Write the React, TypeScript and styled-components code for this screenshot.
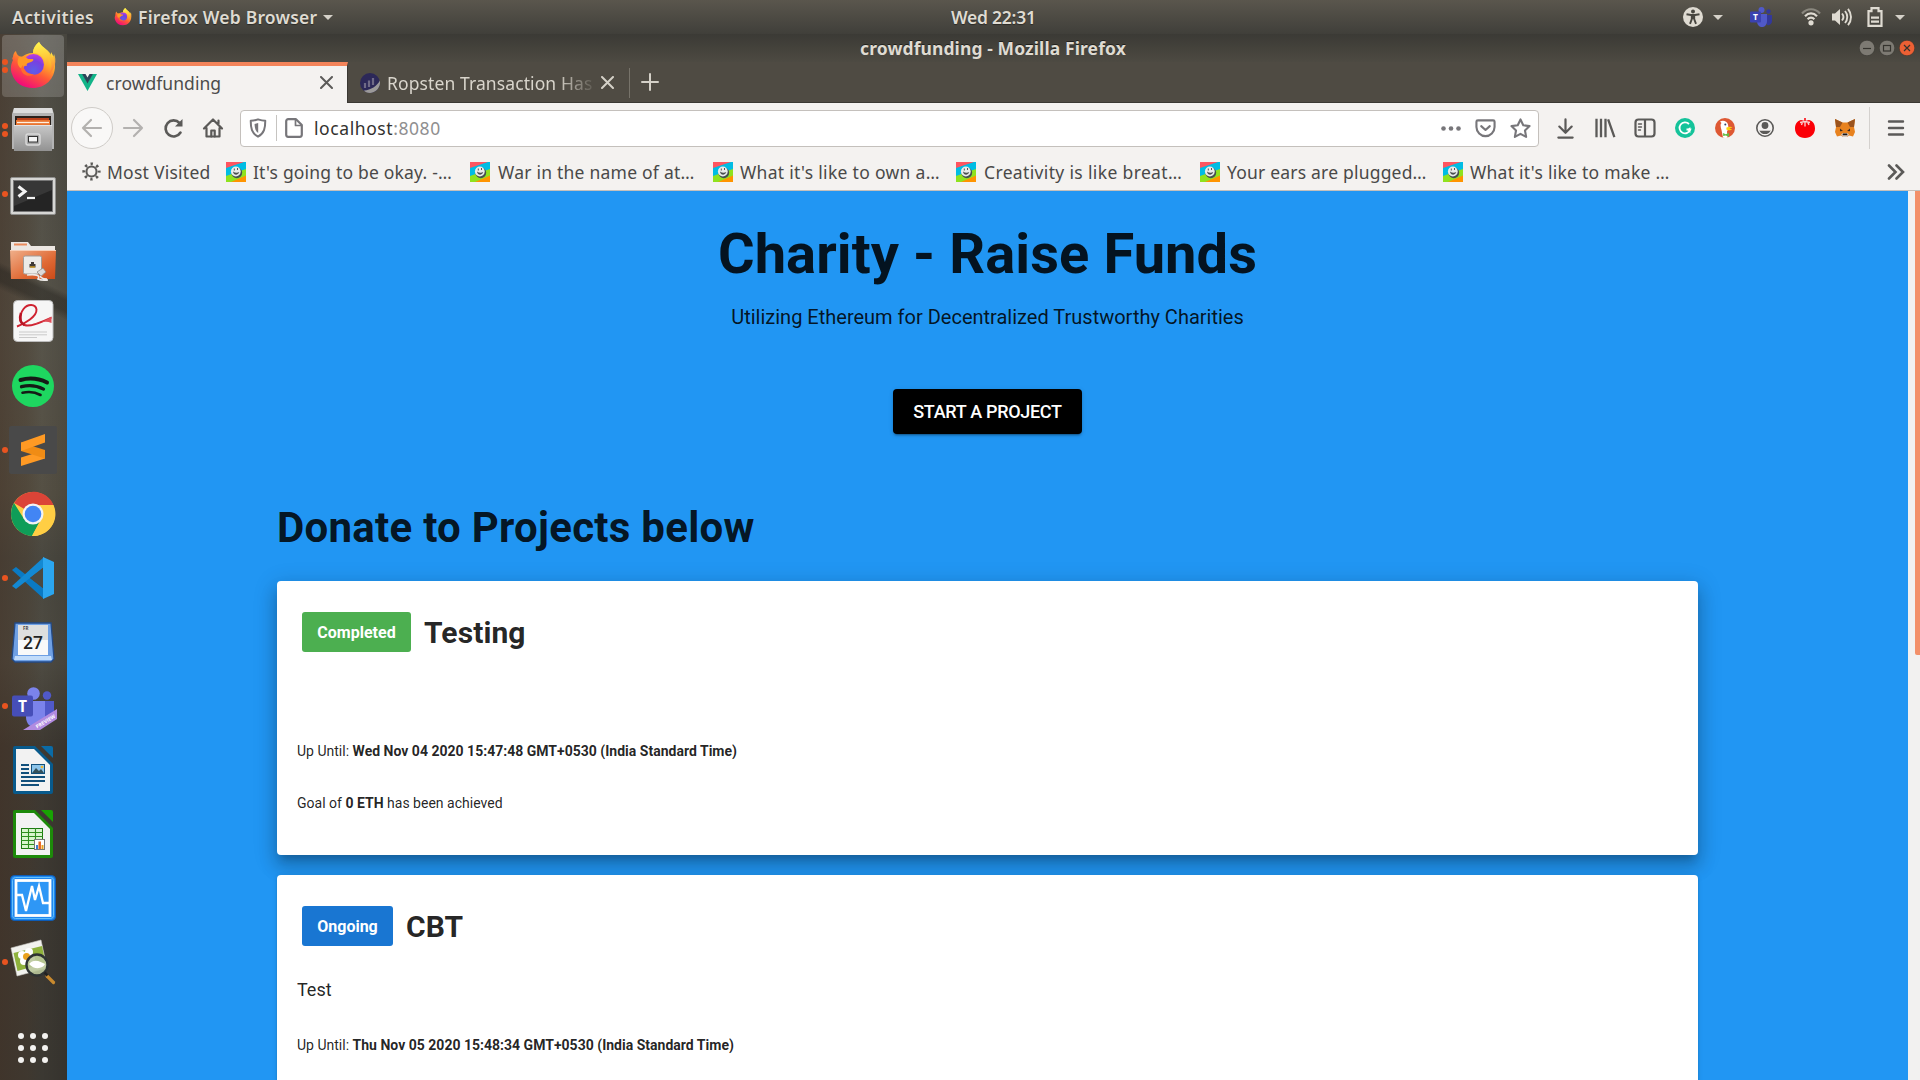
import React from "react";
import styled, { createGlobalStyle } from "styled-components";

const ui = `"Noto Sans", "Open Sans", sans-serif`;

const Global = createGlobalStyle`
  * { box-sizing: border-box; }
  html, body { margin: 0; padding: 0; }
  body { width: 1920px; height: 1080px; overflow: hidden; background: #3c3b37; }
  svg { display: block; flex: none; }
`;

const Desktop = styled.div`
  width: 1920px;
  height: 1080px;
  display: flex;
  flex-direction: column;
  overflow: hidden;
  font-family: ${ui};
`;

/* ---------- top panel ---------- */
const Panel = styled.header`
  height: 34px;
  flex: none;
  display: grid;
  grid-template-columns: 1fr 90px 1fr;
  align-items: center;
  padding: 0 12px 0 12px;
  background: linear-gradient(#5a564d, #403f3a);
  color: #dfdbd2;
`;
const PanelGroup = styled.div<{ $end?: boolean }>`
  display: flex;
  align-items: center;
  height: 34px;
  justify-content: ${(p) => (p.$end ? "flex-end" : "flex-start")};
`;
const PanelText = styled.span<{ $track?: number; $gap?: number }>`
  font-size: 17.5px;
  line-height: 34px;
  font-weight: 600;
  white-space: nowrap;
  text-shadow: 0 1px 1px rgba(0, 0, 0, 0.4);
  letter-spacing: ${(p) => p.$track ?? 0}px;
  margin-right: ${(p) => p.$gap ?? 0}px;
`;
const Clock = styled.span`
  display: block;
  width: 90px;
  margin-left: 36px;
`;
const Caret = styled.i<{ $left: number; $right?: number }>`
  border: 5px solid transparent;
  border-top-color: #d5d1c9;
  border-bottom: 0;
  margin: 1px ${(p) => p.$right ?? 0}px 0 ${(p) => p.$left}px;
`;
const Spaced = styled.span<{ $left?: number }>`
  display: flex;
  margin-left: ${(p) => p.$left ?? 0}px;
`;

/* ---------- dock ---------- */
const Workspace = styled.div`
  flex: 1;
  min-height: 0;
  display: flex;
`;
const Dock = styled.nav`
  width: 67px;
  flex: none;
  display: flex;
  flex-direction: column;
  background:
    linear-gradient(205deg, transparent 0 235px, rgba(35, 33, 29, 0.45) 242px 252px, transparent 260px),
    linear-gradient(90deg, rgba(68, 49, 36, 0.5) 0, rgba(72, 55, 40, 0.3) 40%, transparent 62%, rgba(0, 0, 0, 0.1) 100%),
    linear-gradient(#4f4d45 0, #57544a 28%, #555044 44%, #4a4840 50%, #4e4b42 60%, #3e3932 68%, #3b3832 100%);
`;
const DockItem = styled.div<{ $active?: boolean }>`
  height: 64px;
  flex: none;
  display: flex;
  align-items: center;
  background: ${(p) =>
    p.$active ? "linear-gradient(rgba(255,255,255,.2), rgba(255,255,255,.17))" : "none"};
  background-clip: padding-box;
  border: 1px solid transparent;
  border-radius: 5px;
  margin: 0 2px 0 1px;
`;
const Dots = styled.div`
  width: 7px;
  flex: none;
  display: flex;
  flex-direction: column;
  gap: 2.5px;
`;
const Dot = styled.i`
  width: 6px;
  height: 6px;
  border-radius: 3px;
  background: #e95420;
`;
const AppsGrid = styled.div`
  display: grid;
  grid-template-columns: repeat(3, 6px);
  gap: 6px;
  margin: 39px 0 0 18px;
`;
const AppsDot = styled.i`
  width: 6px;
  height: 6px;
  border-radius: 3px;
  background: #f3f2f0;
`;

/* ---------- browser window ---------- */
const Window = styled.section`
  flex: 1;
  min-width: 0;
  display: flex;
  flex-direction: column;
`;
const TitleBar = styled.div`
  height: 28px;
  flex: none;
  display: flex;
  align-items: center;
  padding: 0 5px 0 793px;
  background: linear-gradient(#3b3a35, #4d4a42);
  color: #dfdbd2;
`;
const WindowTitle = styled.span`
  font-size: 17.5px;
  font-weight: 700;
  line-height: 28px;
  letter-spacing: 0.1px;
  white-space: nowrap;
  text-shadow: 0 -1px 0 rgba(0, 0, 0, 0.5);
`;
const WindowButtons = styled.div`
  display: flex;
  margin-left: auto;
  gap: 4px;
`;
const TabStrip = styled.div`
  height: 41px;
  flex: none;
  display: flex;
  background: #4f4b43;
  border-bottom: 1px solid #3a3833;
`;
const Tab = styled.div<{ $selected?: boolean }>`
  width: ${(p) => (p.$selected ? 281 : 282)}px;
  height: ${(p) => (p.$selected ? 41 : 40)}px;
  display: flex;
  align-items: center;
  padding: ${(p) => (p.$selected ? "0 14px 4px 11px" : "1px 16px 0 12px")};
  color: ${(p) => (p.$selected ? "#4c4c4c" : "#d9d5cc")};
  background: ${(p) => (p.$selected ? "#f4f2f0" : "transparent")};
  border-top: ${(p) => (p.$selected ? "4px solid #f4845a" : "0")};
  border-right: ${(p) => (p.$selected ? "1px solid #3a3833" : "0")};
`;
const TabLabel = styled.span<{ $fade?: boolean }>`
  flex: 1;
  min-width: 0;
  white-space: nowrap;
  font-size: 17.5px;
  line-height: 28px;
  letter-spacing: ${(p) => (p.$fade ? 0.1 : 0.05)}px;
  margin: 0 ${(p) => (p.$fade ? 8 : 10)}px 0 ${(p) => (p.$fade ? 7 : 9)}px;
  mask-image: ${(p) =>
    p.$fade ? "linear-gradient(90deg, #000 82%, rgba(0,0,0,.12) 100%)" : "none"};
`;
const TabDivider = styled.i`
  width: 1px;
  height: 30px;
  margin: 6px 11px 0 -1px;
  background: #77736a;
`;
const NewTab = styled.div`
  display: flex;
  align-items: center;
`;

const NavBar = styled.div`
  height: 54px;
  flex: none;
  display: flex;
  align-items: center;
  padding-bottom: 4px;
  background: #f4f2f0;
  color: #5b5a58;
`;
const BackButton = styled.div`
  width: 42px;
  height: 42px;
  margin-left: 4px;
  display: grid;
  place-items: center;
  border-radius: 50%;
  border: 1px solid #cfccc8;
  background: #f9f8f7;
`;
const NavButton = styled.div<{ $w?: number }>`
  width: ${(p) => p.$w ?? 40}px;
  display: grid;
  place-items: center;
`;
const UrlBar = styled.div`
  width: 1299px;
  height: 37px;
  margin-left: 7px;
  display: flex;
  align-items: center;
  background: #fff;
  border: 1px solid #c4c0bc;
  border-radius: 4px;
  color: #77767a;
`;
const UrlDivider = styled.i`
  width: 1px;
  height: 26px;
  background: #c6c4c1;
  margin: 0 8px 0 1px;
`;
const UrlText = styled.span`
  flex: 1;
  font-size: 17.5px;
  line-height: 34px;
  letter-spacing: 0.58px;
  margin-left: 11px;
  color: #8f8f90;
  b { font-weight: 400; color: #33322f; }
`;
const Extensions = styled.div`
  display: flex;
  align-items: center;
  margin-left: 6px;
`;
const BarDivider = styled.i`
  width: 1px;
  height: 42px;
  margin: 0 6px 0 4px;
  background: #d4d1ce;
`;

const Bookmarks = styled.div`
  height: 34px;
  flex: none;
  display: flex;
  align-items: center;
  padding: 0 15px 4px 15px;
  background: #f4f2f0;
  border-bottom: 1px solid #c4c0bc;
  color: #4a4948;
`;
const Bookmark = styled.div<{ $w: number; $track: number; $gap?: number }>`
  width: ${(p) => p.$w}px;
  flex: none;
  display: flex;
  align-items: center;
  gap: ${(p) => p.$gap ?? 7}px;
  white-space: nowrap;
  font-size: 17.5px;
  line-height: 28px;
  letter-spacing: ${(p) => p.$track}px;
`;
const Overflow = styled.div`
  margin-left: auto;
`;

/* ---------- page ---------- */
const Viewport = styled.div`
  flex: 1;
  min-height: 0;
  display: flex;
  background: #f2f1f0;
`;
const Page = styled.main`
  width: 1841px;
  overflow: hidden;
  padding-top: 31px;
  display: flex;
  flex-direction: column;
  align-items: center;
  background: #2196f3;
  font-family: Roboto, sans-serif;
  color: rgba(0, 0, 0, 0.87);
`;
const ScrollTrack = styled.div`
  width: 12px;
  display: flex;
  justify-content: flex-end;
`;
const ScrollThumb = styled.div`
  width: 5px;
  height: 464px;
  background: #f39069;
  border-radius: 0 0 0 2px;
`;
const Headline = styled.h1`
  flex: none;
  margin: 0;
  font-size: 56px;
  line-height: 64px;
  font-weight: 700;
  letter-spacing: 0.1px;
`;
const Tagline = styled.p`
  flex: none;
  margin: 15px 0 0;
  font-size: 20px;
  line-height: 32px;
`;
const StartButton = styled.button`
  flex: none;
  width: 189px;
  height: 45px;
  margin: 56px 0 69px;
  padding: 0;
  border: 0;
  border-radius: 4px;
  background: #000;
  color: #fff;
  font: 500 18px Roboto, sans-serif;
  letter-spacing: -0.3px;
  box-shadow: 0 3px 1px -2px rgba(0, 0, 0, 0.2), 0 2px 2px rgba(0, 0, 0, 0.14), 0 1px 5px rgba(0, 0, 0, 0.12);
`;
const Projects = styled.section`
  flex: none;
  width: 1421px;
  display: flex;
  flex-direction: column;
`;
const SectionTitle = styled.h2`
  margin: 0 0 28px;
  font-size: 42px;
  line-height: 50px;
  font-weight: 700;
  letter-spacing: 0.0062em;
`;
const Card = styled.article<{ $raised?: boolean }>`
  flex: none;
  height: 274px;
  margin-bottom: 20px;
  padding: 31px 20px 0;
  background: #fff;
  border-radius: 4px;
  box-shadow: ${(p) =>
    p.$raised
      ? "0 7px 8px -4px rgba(0,0,0,.2), 0 12px 17px 2px rgba(0,0,0,.14), 0 5px 22px 4px rgba(0,0,0,.12)"
      : "0 3px 1px -2px rgba(0,0,0,.2), 0 2px 2px rgba(0,0,0,.14), 0 1px 5px rgba(0,0,0,.12)"};
`;
const CardHead = styled.div`
  height: 40px;
  display: flex;
  align-items: center;
  gap: 13px;
  padding-left: 5px;
`;
const Chip = styled.span<{ $tone: string; $w: number }>`
  width: ${(p) => p.$w}px;
  height: 40px;
  border-radius: 3px;
  background: ${(p) => p.$tone};
  color: #fff;
  font-size: 16px;
  font-weight: 700;
  line-height: 42px;
  text-align: center;
`;
const CardTitle = styled.h3`
  margin: 2px 0 0;
  font-size: 30px;
  line-height: 40px;
  font-weight: 700;
  letter-spacing: 0.1px;
`;
const Description = styled.p`
  height: 28px;
  margin: 30px 0;
  font-size: 18px;
  line-height: 28px;
`;
const Meta = styled.p`
  margin: 0 0 30px;
  font-size: 14px;
  line-height: 22px;
  letter-spacing: 0.01px;
`;

/* ---------- panel and toolbar drawings ---------- */
const FirefoxLogo = ({ size, id }: { size: number; id: string }) => (
  <svg width={size} height={size} viewBox="0 0 48 48">
    <defs>
      <linearGradient id={`${id}a`} x1=".8" y1=".05" x2=".3" y2="1">
        <stop offset="0" stopColor="#fff44f" />
        <stop offset=".35" stopColor="#ffae2a" />
        <stop offset=".62" stopColor="#ff5a36" />
        <stop offset="1" stopColor="#f0047f" />
      </linearGradient>
      <radialGradient id={`${id}b`} cx=".5" cy=".8" r=".8">
        <stop offset="0" stopColor="#5b5fe8" />
        <stop offset=".6" stopColor="#7a3fe0" />
        <stop offset="1" stopColor="#c03ce0" />
      </radialGradient>
      <linearGradient id={`${id}c`} x1=".4" y1="0" x2=".6" y2="1">
        <stop offset="0" stopColor="#fff44f" />
        <stop offset=".5" stopColor="#ffc83a" />
        <stop offset="1" stopColor="#ff7a36" />
      </linearGradient>
    </defs>
    <path d="M30 0c-4 3-6 7-6 11-5 0-9 2-11 4l-3-1c-2-1-3-4-3-5-2 1-3 4-3 6-1 1-1 2 0 3-2 4-3 9-1 14 3 9 11 14 21 14 12 0 22-9 22-22 0-6-2-11-4-14 0 2 0 3-1 4C41 8 33 6 30 0z" fill={`url(#${id}a)`} />
    <circle cx="24.500" cy="22.500" r="10.500" fill={`url(#${id}b)`} />
    <path d="M30 0c-5 4-6 8-6 11 9 0 13 7 12 13 4-3 3-8 2-10 5 4 6 12 2 18 6-4 8-14 5-20 0 1-1 3-2 3C41 8 33 6 30 0z" fill={`url(#${id}c)`} opacity=".9" />
    <path d="M10 15c3-1 7-1 9 2h5c1 1 0 3-5 4-1 1-2 1-1 3-3-1-3 1-4 3-5-1-7-7-4-12z" fill="#ff9a26" />
    <path d="M14 23c1 7 7 10 12 9-6 4-14 1-14-6z" fill="#ff6a2e" />
  </svg>
);

const Accessibility = () => (
  <svg width="20" height="20" viewBox="0 0 20 20">
    <circle cx="10" cy="10" r="10" fill="#dfdbd2" />
    <circle cx="10" cy="4.600" r="2" fill="#484640" />
    <path d="M3.500 7.200l4.500.8h4l4.500-.8M8.800 8v4L7 16.800M11.200 8v4l1.800 4.800M10 8v4" fill="none" stroke="#484640" strokeWidth="1.900" />
  </svg>
);
const TeamsTray = () => (
  <svg width="22" height="20" viewBox="0 0 22 20">
    <circle cx="11.500" cy="3" r="3" fill="#5059c9" />
    <circle cx="18.500" cy="4.500" r="2.200" fill="#33389a" />
    <path d="M15 8h7v6a4 4 0 0 1-5 4z" fill="#33389a" />
    <path d="M7 7h10v7c0 8-10 8-10 0z" fill="#5059c9" />
    <rect y="4.500" width="11" height="11" rx="1" fill="#3b42b0" />
    <text x="5.500" y="13" fontSize="8.500" fontWeight="700" fill="#fff" textAnchor="middle" fontFamily="Open Sans, sans-serif">T</text>
  </svg>
);
const Wifi = () => (
  <svg width="20" height="18" viewBox="0 0 20 18" fill="none" stroke="#dfdbd2" strokeWidth="2.200">
    <path d="M1 5.500C6-.2 14-.2 19 5.500" opacity=".4" />
    <path d="M4 8.200c3.500-3.700 8.500-3.700 12 0M6.600 11.200c2-2 4.800-2 6.800 0" />
    <circle cx="10" cy="14.800" r="2.600" fill="#dfdbd2" stroke="none" />
  </svg>
);
const Volume = () => (
  <svg width="20" height="18" viewBox="0 0 20 18" fill="none" stroke="#dfdbd2" strokeWidth="1.900">
    <path d="M0 5.500h3L8 1v16l-5-4.500H0z" fill="#dfdbd2" stroke="none" />
    <path d="M10 5.500c1.700 2 1.700 5 0 7M13 3c3 3.500 3 8.500 0 12M16 .8c4 5 4 11.400 0 16.400" />
  </svg>
);
const Battery = () => (
  <svg width="16" height="20" viewBox="0 0 16 20">
    <path d="M4.500 1.200h7v3h3v14.600h-13V4.200h3z" fill="none" stroke="#dfdbd2" strokeWidth="2.200" />
    <path d="M4 10.700h8M4 14.700h8" stroke="#dfdbd2" strokeWidth="2.300" />
  </svg>
);

type Kind = "min" | "max" | "close";
const WindowButton = ({ kind }: { kind: Kind }) => (
  <svg width="16" height="16" viewBox="0 0 16 16">
    <circle cx="8" cy="8" r="7.800" fill={kind === "close" ? "#ed6034" : "#7d7a73"} stroke="#34322e" strokeWidth=".6" />
    <g stroke="#35332e" strokeWidth="1.200" fill="none">
      {kind === "min" && <path d="M4 8.500h8" />}
      {kind === "max" && <rect x="4.500" y="5.500" width="7" height="5.500" />}
      {kind === "close" && <path d="M5 5l6 6M11 5l-6 6" />}
    </g>
  </svg>
);

const VueLogo = () => (
  <svg width="19" height="17" viewBox="0 0 19 17">
    <path d="M0 0h4.500l5 8.500 5-8.500H19L9.500 17z" fill="#12b488" />
    <path d="M4 0h3.500l2 3.500 2-3.500H15L9.500 9.500z" fill="#2c4558" />
  </svg>
);
const Etherscan = () => (
  <svg width="20" height="20" viewBox="0 0 20 20">
    <circle cx="10" cy="10" r="10" fill="#2c2858" />
    <path d="M4 17.500C11 17 17 13 20 7.500 21 15 15 20 10 20c-3 0-5-1-6-2.500z" fill="#9c9a9a" />
    <path d="M5 10v5M9 7.500v6.500M13 5v7" stroke="#6f6a86" strokeWidth="2.200" />
  </svg>
);
const Cross = ({ color }: { color: string }) => (
  <svg width="13" height="13" viewBox="0 0 13 13">
    <path d="M1 1l11 11M12 1L1 12" stroke={color} strokeWidth="2" strokeLinecap="round" />
  </svg>
);
const Plus = () => (
  <svg width="18" height="18" viewBox="0 0 18 18">
    <path d="M9 1v16M1 9h16" stroke="#d5d1c8" strokeWidth="2" strokeLinecap="round" />
  </svg>
);

const Glyph = ({ children, size = 22, color = "currentColor", w = 2.2 }: { children: React.ReactNode; size?: number; color?: string; w?: number }) => (
  <svg width={size} height={size} viewBox="0 0 22 22" fill="none" stroke={color} strokeWidth={w} strokeLinecap="round" strokeLinejoin="round">
    {children}
  </svg>
);
const Back = () => <Glyph color="#b3b1af"><path d="M20 11H2M10 3l-8 8 8 8" /></Glyph>;
const Forward = () => <Glyph color="#b3b1af"><path d="M2 11h18M12 3l8 8-8 8" /></Glyph>;
const Reload = () => (
  <Glyph w={2.600}>
    <path d="M18.500 15.500A8 8 0 1 1 17.500 6" />
    <path d="M20.500 2v7.500H13z" fill="currentColor" stroke="none" />
  </Glyph>
);
const Home = () => (
  <Glyph>
    <path d="M2 11.500l9-9 9 9M4.500 11v8.500h13V11M16.500 3.500v3" />
    <path d="M9.300 19.500v-6h3.400v6" />
  </Glyph>
);
const Shield = () => (
  <Glyph size={20}>
    <path d="M11 1.500c3 1 5.500 1.500 8 1.500 0 8-1 14-8 17.500C4 17 3 11 3 3c2.500 0 5-.5 8-1.500z" />
    <path d="M11.200 5.500v11c-3-2-3.700-5-4-10z" fill="currentColor" stroke="none" />
  </Glyph>
);
const Doc = () => (
  <svg width="18" height="20" viewBox="0 0 18 20" fill="none" stroke="currentColor" strokeWidth="2.200" strokeLinejoin="round">
    <path d="M3 1.200h8l5.800 5.800v9.800a2 2 0 0 1-2 2H3.200a2 2 0 0 1-2-2V3.200a2 2 0 0 1 2-2z" />
    <path d="M10.500 1.500v6h6" strokeWidth="1.700" />
  </svg>
);
const Ellipsis = () => (
  <svg width="20" height="5" viewBox="0 0 20 5" fill="currentColor">
    <circle cx="2.500" cy="2.500" r="2.300" /><circle cx="10" cy="2.500" r="2.300" /><circle cx="17.500" cy="2.500" r="2.300" />
  </svg>
);
const Pocket = () => (
  <Glyph size={21}>
    <path d="M3 2.500h16c1 0 1.500.6 1.500 1.500v5.500c0 5-4.500 9.500-9.500 9.500S1.500 14.500 1.500 9.500V4c0-.9.500-1.500 1.500-1.500z" />
    <path d="M6.500 8.500l4.500 4 4.500-4" />
  </Glyph>
);
const Star = () => (
  <Glyph size={21}>
    <path d="M11 1.500l2.900 6.100 6.600.9-4.800 4.600 1.200 6.700L11 16.600l-5.900 3.200 1.200-6.700L1.500 8.500l6.600-.9z" />
  </Glyph>
);
const Download = () => <Glyph w={2.300} size={21}><path d="M11 1.500v14M4.500 9l6.500 6.500L17.500 9M3.500 20.500h15" /></Glyph>;
const Library = () => <Glyph w={2.300}><path d="M2.500 3v16M7 3v16M11.500 3v16M14.500 3.500l5.500 15.500" strokeLinecap="square" /></Glyph>;
const Sidebar = () => (
  <Glyph>
    <rect x="1.500" y="2.500" width="19" height="17" rx="3" />
    <path d="M11 3v16" /><path d="M4.500 7h3M4.500 10h3M4.500 13h2" strokeWidth="1.400" />
  </Glyph>
);
const Grammarly = () => (
  <svg width="20" height="20" viewBox="0 0 20 20">
    <circle cx="10" cy="10" r="10" fill="#15c39a" />
    <path d="M14 6A5.500 5.500 0 1 0 15.300 11.500H11.500" fill="none" stroke="#fff" strokeWidth="1.800" />
    <path d="M15.300 9v6.200l-2.800-3.700z" fill="#fff" />
  </svg>
);
const Duck = () => (
  <svg width="20" height="20" viewBox="0 0 20 20">
    <circle cx="10" cy="10" r="10" fill="#de5833" />
    <path d="M5 3.500c3-1.500 7-.5 8 3l.6 4-1.600 3 .5 5.900c-2 .8-3.500.6-4.500.2L6.500 12C5.500 8.500 5 6 6.500 5z" fill="#fff" />
    <circle cx="10.300" cy="6.500" r="1" fill="#35466b" />
    <path d="M11.500 9.500c2.500-1.200 5-1 6-.2-1 .8-2.600 1-3.300 1.200 1.300.5 2.300.3 2.800.8-1.500 1.600-4.500 1-5.700.2z" fill="#fdd20a" />
    <path d="M8 15l2.700 1.200L14 15v3.800l-3.300-1.200L8.200 18z" fill="#65bc46" />
  </svg>
);
const Account = () => (
  <svg width="18" height="18" viewBox="0 0 18 18">
    <circle cx="9" cy="9" r="8.200" fill="none" stroke="#5b5a58" strokeWidth="1.600" />
    <circle cx="9" cy="6.500" r="3.400" fill="#5b5a58" />
    <path d="M3.300 11.500c1.500.3 3 .3 4 .3h3.400c1 0 2.500 0 4-.3A6.300 6.300 0 0 1 3.300 11.500z" fill="#5b5a58" />
  </svg>
);
const Tomato = () => (
  <svg width="20" height="20" viewBox="0 0 20 20">
    <path d="M6 2C1.500 3 0 7 0 10.500 0 16 4 20 10 20s10-4 10-9.500C20 7 18.500 3 14 2l-4 1z" fill="#fb0007" />
    <path d="M10 0v4M5 4.500l5-1 5 1M7.500 4l-1 3M10 4v4.500M12.500 4l1.500 3" stroke="#f9d5d4" strokeWidth="1.300" fill="none" />
    <path d="M10 0v3" stroke="#fb0007" strokeWidth="1.500" />
  </svg>
);
const Fox = () => (
  <svg width="20" height="18" viewBox="0 0 20 18">
    <path d="M0 0l7.500 3.500h5L20 0l-1 8 1 5-2 4.500-4-1-2 1.500H8l-2-1.500-4 1L0 13l1-5z" fill="#e8821e" />
    <path d="M0 0l7.500 3.500L5 8H1zM20 0l-7.500 3.500L15 8h4z" fill="#9a531d" />
    <path d="M5 9.500l3 2.500-3 .3zM15 9.500L12 12l3 .3z" fill="#3c2b23" />
    <path d="M6 15.500l2-1.500h4l2 1.500-2 2.500H8z" fill="#d9c8bd" />
    <path d="M8 14.500h4l.5 1.800h-5z" fill="#1b1614" />
  </svg>
);
const Burger = () => (
  <svg width="18" height="16" viewBox="0 0 18 16">
    <path d="M2 1.500h14M2 8h14M2 14.500h14" stroke="#5b5a58" strokeWidth="2.400" strokeLinecap="round" />
  </svg>
);
const Gear = () => (
  <svg width="19" height="19" viewBox="0 0 20 20" fill="none" stroke="#5b5a58">
    <circle cx="10" cy="10" r="5.300" strokeWidth="2.200" />
    <circle cx="10" cy="10" r="8.100" strokeWidth="3" strokeDasharray="2.500 3.860" strokeDashoffset="1.250" />
  </svg>
);
const Favicon = () => (
  <svg width="20" height="20" viewBox="0 0 20 20">
    <rect width="20" height="20" fill="#00bce4" />
    <path d="M0 0h18L0 6z" fill="#ff5560" />
    <path d="M0 14L20 7v8L8 20H0z" fill="#8fe21e" />
    <path d="M20 13.500V20H5z" fill="#ff9400" />
    <circle cx="10.800" cy="10.800" r="5.400" fill="#46504e" />
    <circle cx="9.800" cy="9.500" r="4.900" fill="#e9ecec" />
    <path d="M7 9.500c.5 4 5 4.300 6.300.5-2 1.300-4.300 1-6.300-.5z" fill="#4b5050" />
    <path d="M8.300 6.500v2M11.500 6v2" stroke="#555" fill="none" />
  </svg>
);
const Chevrons = () => (
  <svg width="18" height="16" viewBox="0 0 18 16">
    <path d="M2 1.500L8.500 8 2 14.500M9.500 1.500L16 8l-6.500 6.500" fill="none" stroke="#5b5a58" strokeWidth="2.600" strokeLinecap="round" />
  </svg>
);

/* ---------- launcher drawings ---------- */
const Icon48 = ({ children }: { children: React.ReactNode }) => (
  <svg width="48" height="48" viewBox="0 0 48 48">{children}</svg>
);
const Files = () => (
  <Icon48>
    <defs>
      <linearGradient id="cab" x1="0" y1="0" x2="0" y2="1"><stop offset="0" stopColor="#c8c8c8" /><stop offset="1" stopColor="#929292" /></linearGradient>
    </defs>
    <path d="M5 2h38l2 6v35H3V8z" fill="#b4b4b4" />
    <path d="M5 2h38l1 5H4z" fill="#dcdcdc" />
    <path d="M6 10h36v10H6z" fill="#2a211c" />
    <path d="M8 12h32v3H8z" fill="#b9401a" /><path d="M7 14h34v7H7z" fill="#e9742f" /><path d="M8 16.500h32" stroke="#fff0df" strokeWidth="1.300" />
    <path d="M5 19h38v26H5z" fill="url(#cab)" /><path d="M5 19.500h38" stroke="#e2e2e2" />
    <rect x="17" y="28" width="14" height="11" rx="2" fill="#a8a8a8" stroke="#dadada" strokeWidth="1.400" />
    <rect x="19.500" y="30.500" width="9" height="5.500" fill="#f5f5f5" stroke="#333" />
  </Icon48>
);
const Terminal = () => (
  <Icon48>
    <rect x="1.500" y="7.500" width="45" height="37" rx="1.500" fill="#d6d6d4" stroke="#8f8f8d" />
    <rect x="4.500" y="10.500" width="39" height="31" fill="#242424" stroke="#777" />
    <path d="M5 11h38v9L5 36z" fill="#474747" opacity=".55" />
    <path d="M9.500 16.500l6.500 5-6.500 5" fill="none" stroke="#f4f4f4" strokeWidth="3" />
    <path d="M18 28h8" stroke="#f4f4f4" strokeWidth="2.200" />
  </Icon48>
);
const NetworkFolder = () => (
  <Icon48>
    <defs>
      <linearGradient id="fold" x1="0" y1="0" x2="1" y2="1"><stop offset="0" stopColor="#f0b08b" /><stop offset=".6" stopColor="#e06a35" /><stop offset="1" stopColor="#cc4a17" /></linearGradient>
    </defs>
    <path d="M2 8h17l3 4h24v8H2z" fill="#ece7e3" /><path d="M5 10.500h13" stroke="#eb8b5c" strokeWidth="2" />
    <path d="M1 16h46l-1 29H2z" fill="url(#fold)" /><path d="M1 16.500h46" stroke="#f8cdb5" />
    <rect x="14.500" y="22" width="18" height="18" rx="1.500" fill="#ecebe8" stroke="#a19c98" />
    <path d="M20.500 33.500v-3.500h1.500v-2h3v2h1.500v3.500z" fill="#3e3a36" /><path d="M21 33h5" stroke="#d9a520" strokeWidth="1.300" />
    <path d="M18 41c8-1 14 0 11 4 4 2 8 1 10 1M34 40c-6 3 0 5 4 5" fill="none" stroke="#ece9e6" strokeWidth="1.600" />
    <path d="M28 38l6-4 3 4-5 4z" fill="#dcdad7" stroke="#88837e" strokeWidth=".7" />
  </Icon48>
);
const PdfReader = () => (
  <Icon48>
    <rect x="4.500" y="2.500" width="39.500" height="41" rx="4" fill="#f6f6f6" stroke="#bcbcbc" />
    <path d="M8 28.500c8-3 20-10 19.500-17-.8-6-9-6-13-.5C10 17 11 25 15.500 27c5 2 13-1 27-7.500" fill="none" stroke="#cf2230" strokeWidth="1.900" />
    <path d="M12 15c-2 6-1 10 3.500 12" fill="none" stroke="#b81424" strokeWidth="2.500" />
    <path d="M22 26.500c8-1 15-4 20.500-8v6.500c-6-2.500-12-.5-20.500 1.500z" fill="#e0505a" />
    <path d="M10 34h28M10 36.800h28M10 39.500h18" stroke="#cacaca" />
  </Icon48>
);
const Spotify = () => (
  <Icon48>
    <circle cx="24" cy="24" r="21" fill="#1ed760" />
    <g fill="none" stroke="#151a16" strokeLinecap="round">
      <path d="M11.500 18c9-2.500 18-1.700 26.500 2.500" strokeWidth="4" />
      <path d="M12.500 24.700c7.500-2 15-1.300 22 2.400" strokeWidth="3.300" />
      <path d="M13.500 30.800c6.500-1.500 12.500-.9 18 2.200" strokeWidth="2.600" />
    </g>
  </Icon48>
);
const Sublime = () => (
  <Icon48>
    <rect width="48" height="48" rx="2.500" fill="#494949" />
    <path d="M36 24v8.500L12 40v-8.500z" fill="#ff9a24" />
    <path d="M12 16.500L36 24v8.500L12 25z" fill="#f08c15" />
    <path d="M12 16.500L36 8v8.500L12 25z" fill="#ff9a24" />
  </Icon48>
);
const Chrome = () => (
  <Icon48>
    <circle cx="24" cy="24" r="22" fill="#ffce44" />
    <path d="M24 24L5 13A22 22 0 0 1 44.500 15H24z" fill="#db4437" />
    <path d="M24 24l-9 5L5 13a22 22 0 0 0 18 33l9-17z" fill="#0f9d58" />
    <path d="M33 28l-10 18a22 22 0 0 0 21.500-31H24z" fill="#ffce44" />
    <circle cx="24" cy="24" r="10.500" fill="#f3f3f3" /><circle cx="24" cy="24" r="8.300" fill="#4285f4" />
  </Icon48>
);
const VsCode = () => (
  <Icon48>
    <path d="M3 16l4-3 28 22v10z" fill="#0a7ac4" />
    <path d="M3 32l4 3 28-22V3z" fill="#1389d3" />
    <path d="M34 3l11 5v32l-11 5z" fill="#2ba6f0" />
    <path d="M34 14v20l-13-10z" fill="#4b4941" />
  </Icon48>
);
const Calendar = () => (
  <Icon48>
    <path d="M6 5h36l3 36-3 3H6l-3-3z" fill="#6fa0e4" stroke="#234a87" strokeWidth="1.300" />
    <path d="M6 38h36l1 4H5z" fill="#c2dcfa" />
    <path d="M9 7h30v30H9z" fill="#f9f9f9" /><path d="M9 7h30v15H9z" fill="#dedede" />
    <text x="14" y="12" fontSize="4.500" fontWeight="700" fill="#444" fontFamily="Open Sans, sans-serif">FR</text>
    <text x="24" y="30.500" fontSize="17.500" textAnchor="middle" fontWeight="500" fill="#222" fontFamily="Roboto, sans-serif">27</text>
  </Icon48>
);
const Teams = () => (
  <Icon48>
    <circle cx="24.500" cy="11.500" r="6.300" fill="#7b83eb" /><circle cx="38" cy="13.500" r="4.200" fill="#5059c9" />
    <path d="M32 19h13v14c0 6-8 9-13 4z" fill="#5059c9" />
    <path d="M17 19h19v16c0 14-19 14-19 0z" fill="#7b83eb" />
    <rect x="3" y="13.500" width="21" height="21" rx="2" fill="#464eb8" />
    <text x="13.500" y="29.500" fontSize="15.500" fontWeight="700" fill="#fff" textAnchor="middle" fontFamily="Open Sans, sans-serif">T</text>
    <path d="M14 48L48 27v10L31 48z" fill="#b18be0" />
    <text x="28" y="46.500" fontSize="5" fontWeight="700" fill="#fff" transform="rotate(-31 28 46.500)" fontFamily="Open Sans, sans-serif">PREVIEW</text>
  </Icon48>
);
const OfficeSheet = ({ dark, light, children }: { dark: string; light: string; children: React.ReactNode }) => (
  <Icon48>
    <path d="M6 0h20l18 18v28a2 2 0 0 1-2 2H6a2 2 0 0 1-2-2V2a2 2 0 0 1 2-2z" fill={dark} />
    <path d="M32 0h10a2 2 0 0 1 2 2v10z" fill={light} />
    <path d="M7 3h18l16 16v26H7z" fill="#f2f2f2" />
    {children}
  </Icon48>
);
const Writer = () => (
  <OfficeSheet dark="#085a8c" light="#0a6ba6">
    <path d="M12 19h8M12 23h8M12 27h8M12 31h24M12 35h24M12 39h18" stroke="#12507c" strokeWidth="1.900" />
    <rect x="22.500" y="18.500" width="13" height="9" fill="#8cc4ea" stroke="#12507c" />
    <path d="M23 27l4-5 3 3 2-2 3 4z" fill="#35505a" /><circle cx="33" cy="21" r="1.300" fill="#f2b632" />
  </OfficeSheet>
);
const Calc = () => (
  <OfficeSheet dark="#1d8a0a" light="#18a303">
    <rect x="12.500" y="18.500" width="21" height="20" fill="#d8f5cd" stroke="#1d7a10" />
    <path d="M12 22.500h22M12 26.500h22M12 30.500h22M12 34.500h22M19.500 18v21M26.500 18v21" stroke="#2e8f1f" strokeWidth="1.100" />
    <rect x="25.500" y="29.500" width="10" height="10" fill="#fff" stroke="#777" />
    <path d="M28 39v-4" stroke="#3a7fd0" strokeWidth="2" /><path d="M30.700 39v-7.500" stroke="#e8641f" strokeWidth="2.500" /><path d="M33.500 39v-4" stroke="#e8a31f" strokeWidth="2" />
  </OfficeSheet>
);
const Monitor = () => (
  <Icon48>
    <rect x="1.500" y="1.500" width="45" height="45" rx="4" fill="#1f87ee" stroke="#0c5cb8" />
    <rect x="3.500" y="3.500" width="41" height="41" rx="3" fill="none" stroke="#65c0fb" />
    <rect x="7" y="6.500" width="34" height="35" fill="#2e97f6" stroke="#fff" strokeWidth="2.800" />
    <path d="M8 21h5l4 16 6-25 3 14 4-14 4 17h6" fill="none" stroke="#fff" strokeWidth="2.300" />
  </Icon48>
);
const ImageViewer = () => (
  <Icon48>
    <path d="M2 10L32 2l6 28-30 8z" fill="#f2f2ee" stroke="#c9c9c4" strokeWidth=".6" />
    <path d="M4.500 15L33 8l3.500 17-28 8z" fill="#8fb23c" />
    <g fill="#fff">
      <circle cx="13" cy="17" r="4" /><circle cx="20" cy="14" r="4" /><circle cx="22" cy="20" r="4" /><circle cx="15" cy="23" r="4" />
    </g>
    <circle cx="17.500" cy="18.500" r="3.500" fill="#e9a11c" />
    <circle cx="28" cy="27" r="10.500" fill="#b9c79a" opacity=".9" /><path d="M20 26c5-6 12-2 16 0-2 5-11 6-16 0z" fill="#fff" />
    <circle cx="28" cy="27" r="10.500" fill="none" stroke="#2e3333" strokeWidth="2.400" />
    <path d="M38 38l6.500 6.500" stroke="#c98a2e" strokeWidth="3.200" strokeLinecap="round" />
    <path d="M35.500 34.500l3 3" stroke="#222" strokeWidth="2.500" />
  </Icon48>
);

const launchers: { icon: React.ReactNode; dots: number; active?: boolean }[] = [
  { icon: <FirefoxLogo size={48} id="fxd" />, dots: 2, active: true },
  { icon: <Files />, dots: 2 },
  { icon: <Terminal />, dots: 1 },
  { icon: <NetworkFolder />, dots: 0 },
  { icon: <PdfReader />, dots: 0 },
  { icon: <Spotify />, dots: 0 },
  { icon: <Sublime />, dots: 1 },
  { icon: <Chrome />, dots: 0 },
  { icon: <VsCode />, dots: 1 },
  { icon: <Calendar />, dots: 0 },
  { icon: <Teams />, dots: 1 },
  { icon: <Writer />, dots: 0 },
  { icon: <Calc />, dots: 0 },
  { icon: <Monitor />, dots: 0 },
  { icon: <ImageViewer />, dots: 1 },
];

const bookmarks = [
  { label: "It's going to be okay. -…", w: 244, track: 0.19 },
  { label: "War in the name of at…", w: 243, track: 0.23, gap: 8 },
  { label: "What it's like to own a…", w: 243, track: 0.3 },
  { label: "Creativity is like breat…", w: 244, track: 0.35, gap: 8 },
  { label: "Your ears are plugged…", w: 243, track: 0.2 },
  { label: "What it's like to make …", w: 243, track: 0.26 },
];

export default function App() {
  return (
    <Desktop>
      <Global />
      <Panel>
        <PanelGroup>
          <PanelText $track={0.4} $gap={20}>Activities</PanelText>
          <FirefoxLogo size={18} id="fxp" />
          <Spaced $left={6}><PanelText $track={0.2}>Firefox Web Browser</PanelText></Spaced>
          <Caret $left={6} />
        </PanelGroup>
        <PanelText as="time" $track={-0.25}><Clock>Wed 22:31</Clock></PanelText>
        <PanelGroup $end>
          <Accessibility />
          <Caret $left={10} />
          <Spaced $left={27}><TeamsTray /></Spaced>
          <Spaced $left={29}><Wifi /></Spaced>
          <Spaced $left={11}><Volume /></Spaced>
          <Spaced $left={15}><Battery /></Spaced>
          <Caret $left={12} $right={3} />
        </PanelGroup>
      </Panel>
      <Workspace>
        <Dock>
          {launchers.map((l, i) => (
            <DockItem key={i} $active={l.active}>
              <Dots>{Array.from({ length: l.dots }, (_, d) => <Dot key={d} />)}</Dots>
              {l.icon}
            </DockItem>
          ))}
          <AppsGrid>{Array.from({ length: 9 }, (_, i) => <AppsDot key={i} />)}</AppsGrid>
        </Dock>
        <Window>
          <TitleBar>
            <WindowTitle>crowdfunding - Mozilla Firefox</WindowTitle>
            <WindowButtons>
              <WindowButton kind="min" />
              <WindowButton kind="max" />
              <WindowButton kind="close" />
            </WindowButtons>
          </TitleBar>
          <TabStrip>
            <Tab $selected>
              <VueLogo />
              <TabLabel>crowdfunding</TabLabel>
              <Cross color="#5c5b59" />
            </Tab>
            <Tab>
              <Etherscan />
              <TabLabel $fade>Ropsten Transaction Has</TabLabel>
              <Cross color="#d5d1c8" />
            </Tab>
            <TabDivider />
            <NewTab><Plus /></NewTab>
          </TabStrip>
          <NavBar>
            <BackButton><Back /></BackButton>
            <NavButton><Forward /></NavButton>
            <NavButton><Reload /></NavButton>
            <NavButton><Home /></NavButton>
            <UrlBar>
              <NavButton $w={34}><Shield /></NavButton>
              <UrlDivider />
              <Doc />
              <UrlText><b>localhost</b>:8080</UrlText>
              <NavButton $w={35}><Ellipsis /></NavButton>
              <NavButton $w={35}><Pocket /></NavButton>
              <NavButton $w={35}><Star /></NavButton>
            </UrlBar>
            <Extensions>
              <NavButton><Download /></NavButton>
              <NavButton><Library /></NavButton>
              <NavButton><Sidebar /></NavButton>
              <NavButton><Grammarly /></NavButton>
              <NavButton><Duck /></NavButton>
              <NavButton><Account /></NavButton>
              <NavButton><Tomato /></NavButton>
              <NavButton><Fox /></NavButton>
            </Extensions>
            <BarDivider />
            <NavButton><Burger /></NavButton>
          </NavBar>
          <Bookmarks>
            <Bookmark $w={144} $track={0.25} $gap={6}><Gear />Most Visited</Bookmark>
            {bookmarks.map((b) => (
              <Bookmark key={b.label} $w={b.w} $track={b.track} $gap={b.gap}><Favicon />{b.label}</Bookmark>
            ))}
            <Overflow><Chevrons /></Overflow>
          </Bookmarks>
          <Viewport>
            <Page>
              <Headline>Charity - Raise Funds</Headline>
              <Tagline>Utilizing Ethereum for Decentralized Trustworthy Charities</Tagline>
              <StartButton>START A PROJECT</StartButton>
              <Projects>
                <SectionTitle>Donate to Projects below</SectionTitle>
                <Card $raised>
                  <CardHead>
                    <Chip $tone="#4caf50" $w={109}>Completed</Chip>
                    <CardTitle>Testing</CardTitle>
                  </CardHead>
                  <Description />
                  <Meta>Up Until: <b>Wed Nov 04 2020 15:47:48 GMT+0530 (India Standard Time)</b></Meta>
                  <Meta>Goal of <b>0 ETH</b> has been achieved</Meta>
                </Card>
                <Card>
                  <CardHead>
                    <Chip $tone="#1976d2" $w={91}>Ongoing</Chip>
                    <CardTitle>CBT</CardTitle>
                  </CardHead>
                  <Description>Test</Description>
                  <Meta>Up Until: <b>Thu Nov 05 2020 15:48:34 GMT+0530 (India Standard Time)</b></Meta>
                </Card>
              </Projects>
            </Page>
            <ScrollTrack><ScrollThumb /></ScrollTrack>
          </Viewport>
        </Window>
      </Workspace>
    </Desktop>
  );
}
